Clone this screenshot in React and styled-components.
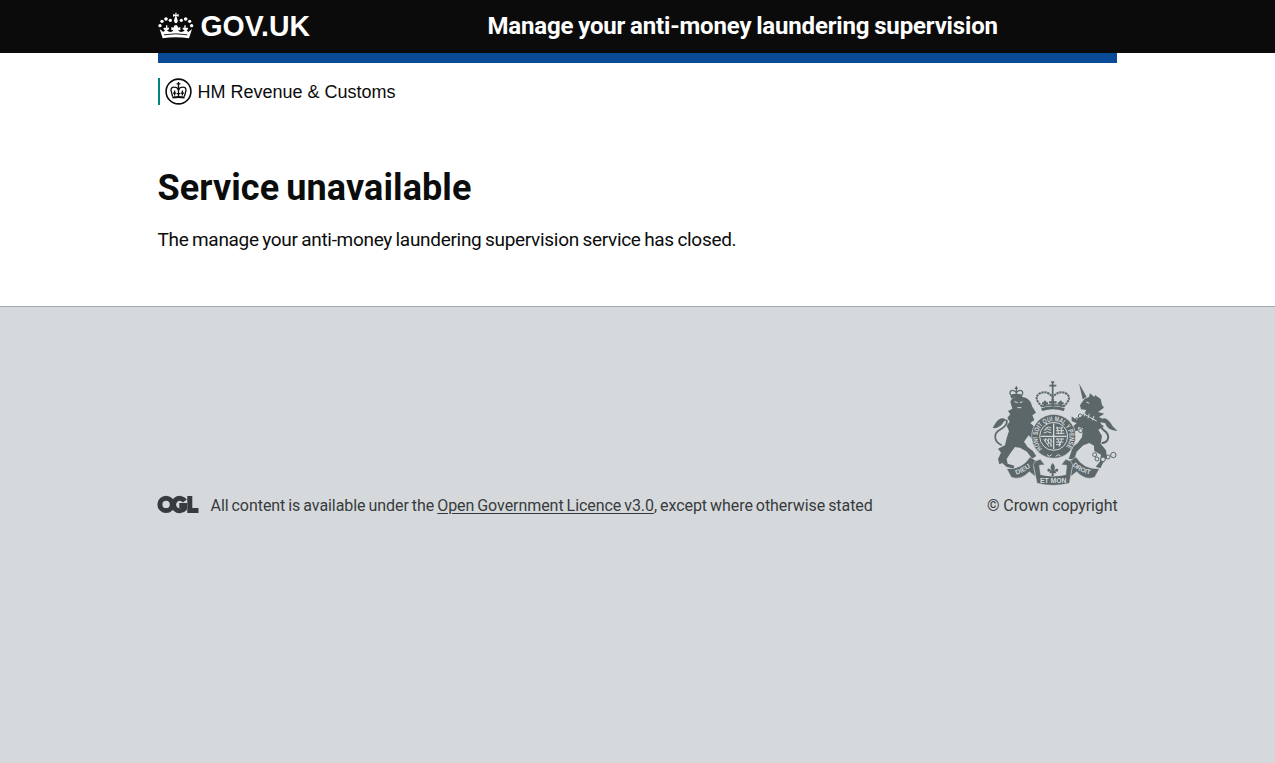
import React from 'react';
import styled, { createGlobalStyle } from 'styled-components';

const GlobalStyle = createGlobalStyle`
  * { box-sizing: border-box; }
  html { background: #d5d9dc; }
  body { margin: 0; background: #d5d9dc; font-family: Roboto, "Liberation Sans", sans-serif; color: #0b0c0c; }
`;

const Page = styled.div`
  min-height: 763px;
  display: flex;
  flex-direction: column;
`;
const Container = styled.div`
  width: 960px;
  margin: 0 auto;
`;
const Header = styled.header`
  height: 53px;
  background: #0b0b0b;
  color: #fff;
`;
const HeaderRow = styled(Container)`
  display: flex;
  height: 53px;
  align-items: flex-start;
`;
const HomeLink = styled.a`
  width: 330px;
  padding-top: 12px;
  color: #fff;
  line-height: 0;
`;
const ServiceName = styled.span`
  font-size: 24px;
  font-weight: 700;
  line-height: 30px;
  padding-top: 11px;
  white-space: nowrap;
  letter-spacing: ${(p) => p.$track}px;
  word-spacing: ${(p) => p.$word}px;
`;
const Main = styled.main`
  height: 254px;
  background: #fff;
  border-bottom: 1px solid #a1acb2;
`;
const BlueBar = styled.div`
  height: 10px;
  margin-right: 1px;
  background: #084a95;
`;
const Organisation = styled.div`
  margin-top: 15px;
  height: 27px;
  padding-left: 5px;
  border-left: 2px solid #00857d;
  display: flex;
  align-items: center;
`;
const OrganisationName = styled.span`
  font-family: "Liberation Sans", Arial, sans-serif;
  font-size: 18px;
  line-height: 27px;
  margin-left: 6px;
  padding-top: 2px;
  white-space: nowrap;
`;
const Heading = styled.h1`
  margin: 63px 0 0;
  font-size: 36px;
  line-height: 40px;
  font-weight: 700;
  white-space: nowrap;
  letter-spacing: ${(p) => p.$track}px;
  word-spacing: ${(p) => p.$word}px;
`;
const Body = styled.p`
  margin: 19px 0 0;
  font-size: 19px;
  line-height: 25px;
  white-space: nowrap;
  letter-spacing: ${(p) => p.$track}px;
  word-spacing: ${(p) => p.$word}px;
`;
const Footer = styled.footer`
  flex: 1;
  padding-top: 74px;
  color: #383b3d;
`;
const FooterRow = styled(Container)`
  display: flex;
  justify-content: space-between;
  align-items: flex-end;
  font-size: 16px;
  line-height: 20px;
`;
const Licence = styled.div`
  display: flex;
  align-items: flex-start;
  white-space: nowrap;
  height: 20px;
`;
const LicenceText = styled.span`
  margin-left: 12px;
  letter-spacing: ${(p) => p.$track}px;
  word-spacing: ${(p) => p.$word}px;
  a { color: inherit; text-decoration: underline; text-underline-offset: 2px; text-decoration-thickness: 1px; }
`;
const Copyright = styled.div`
  display: flex;
  flex-direction: column;
  align-items: flex-end;
  gap: 10px;
  white-space: nowrap;
  letter-spacing: ${(p) => p.$track}px;
`;

const GovLogo = () => (
  <svg width="156" height="28" viewBox="0 0 156 28" overflow="visible" role="img" aria-label="GOV.UK">
    <g fill="#fff" transform="translate(-8 -12) scale(.3333)">
      <path d="M76 38H80L79 44L86 42V50L79 48L83 61Q84 69 77 70Q71 69 72 61L76 48L69 50V42L76 44Z" />
      <circle cx="61" cy="61" r="5" /><circle cx="48" cy="57" r="5.500" /><circle cx="36" cy="64" r="5" /><circle cx="30" cy="77" r="5" />
      <circle cx="94" cy="61" r="5" /><circle cx="107" cy="57" r="5.500" /><circle cx="119" cy="64" r="5" /><circle cx="125" cy="77" r="5" />
      <path d="M29 87L40 96L45 91L40 87L42 83H48L48 76H52V83H57V88L51 91Q58 99 68 94L70 89L64 91V81L70 83L74 76H81L85 83L91 81V91L85 89L87 94Q97 99 104 91L98 88V83H103V76H107V83H113L115 87L110 91L115 96L126 87L117 115Q77 109 38 115Z" />
    </g>
    <path d="M6 22.800Q18 20.800 29.300 22.800" fill="none" stroke="#0b0b0b" strokeWidth=".9" />
    <text x="42.5" y="24.400" fill="#fff" fontFamily="Liberation Sans, Arial, sans-serif" fontWeight="700" fontSize="30" textLength="109.500" lengthAdjust="spacingAndGlyphs">GOV.UK</text>
  </svg>
);

const Crest = () => (
  <svg width="27" height="27" viewBox="0 0 27 27" aria-hidden="true">
    <circle cx="13.5" cy="13.5" r="12.4" fill="none" stroke="#0b0c0c" strokeWidth="1.6" />
    <g fill="none" stroke="#0b0c0c" strokeWidth="1.3">
      <path d="M13.5 4v9M11.600 5.900h3.800" />
      <path d="M7.600 18.500L6 12.500C5.700 10 7.500 9 9.200 9.100c2.300 0 3.600 .9 4.300 2.900M19.400 18.500L21 12.500C21.300 10 19.500 9 17.800 9.100c-2.300 0-3.600 .9-4.300 2.900" />
      <path d="M7.400 19.600c4-.9 8.200-.9 12.200 0" strokeWidth="2" />
      <path d="M9.600 12.500v5M8 15.200h3.200M17.400 12.500v5M15.800 15.200H19M13.500 13v5M11.700 15.700h3.600" />
    </g>
  </svg>
);

const OglLogo = () => (
  <svg width="41" height="18" viewBox="0 0 41 18" overflow="visible" role="img" aria-label="OGL">
    <g fill="none" stroke="#383b3d" strokeWidth="5" transform="translate(-.5 -.4)">
      <circle cx="8.600" cy="8.800" r="6.200" />
      <path d="M27.400 5.400A6.200 6.200 0 1 0 27 13V10H21.800" />
      <path d="M32.300 .3V14.900H41" />
    </g>
  </svg>
);

const INK = '#5b6769';
const PAPER = '#d5d9dc';

const RoyalArms = () => (
  <svg width="126" height="105" viewBox="36 32 378 315" aria-hidden="true">
    <defs>
      <path id="garter" d="M187 235A48 48 0 1 1 254 235" />
      <path id="ribbonLeft" d="M109 313Q139 304 160 281" />
      <path id="ribbonRight" d="M277 285Q300 308 336 314" />
    </defs>
    <g fill={INK}>
      <path d="M91 94C94 82 105 78 123 79C144 81 154 93 156 108L168 127L157 135L163 149L151 158L163 169L158 184L171 205L175 229L163 231L159 209L146 195L132 214L143 230L158 241L169 257L156 265L141 244L120 232L105 230L91 249L80 266L83 280L103 286L101 295L79 289L67 278L58 282L54 266L63 247L54 235L75 225L80 203L87 182L80 166L89 154L82 142L91 132L84 122L97 115Z" />
      <path d="M343 80L330 69L327 80L313 86L300 105L303 117L319 119L306 137L289 148L275 138L275 152L290 159L276 171L281 185L295 180L294 170L309 174L306 201L293 218L279 229L266 266L283 267L290 244L310 225L328 218L342 226L343 242L363 253L359 275L347 289L361 294L369 278L381 263L378 240L362 220L366 197L355 178L372 168L357 157L375 150L357 140L373 130L354 125L372 112L366 104L362 86L345 74Z" />
      <path d="M308 87L297 39L320 80Z" />
      <path d="M147 164L177 176L184 190L158 180L138 190L130 180Z" />
      <path d="M91 73Q109 67 127 73L126 84Q109 79 93 84Z" />
    </g>
    <g fill="none" stroke={INK}>
      <path d="M65 225C38 212 42 187 60 178C75 170 85 159 79 148" strokeWidth="5" />
      <path d="M365 219C382 217 391 202 379 186C364 175 354 165 360 151" strokeWidth="6" />
      <path d="M92 74C85 60 99 55 109 67C119 55 133 60 126 74M109 48V76M104 54H114" strokeWidth="4" />
      <path d="M187 109Q160 85 176 71Q199 57 218 80Q239 57 261 71Q277 85 250 109" strokeWidth="6" strokeDasharray="7 2" />
      <path d="M218 36V95M208 46H229M213 35H223" strokeWidth="5" />
      <path d="M195 91V108M186 99H204M242 91V108M233 99H251M218 86V108M207 96H230" strokeWidth="7" />
      <path d="M187 108Q219 99 251 108" strokeWidth="5" />
      <path d="M185 118Q219 106 253 118" strokeWidth="9" />
    </g>
    <path d="M80 150C63 133 48 154 38 173C54 176 66 165 72 153ZM359 155C372 130 390 154 398 168L412 181C394 182 381 174 376 159Z" fill={INK} />
    <circle cx="221" cy="198" r="66" fill={INK} stroke={PAPER} strokeWidth="2" />
    <circle cx="221" cy="198" r="42" fill={INK} stroke={PAPER} strokeWidth="3" />
    <path d="M221 159V237M182 198H260" stroke={PAPER} strokeWidth="4" />
    <g fill="none" stroke={PAPER} strokeWidth="3">
      <path d="M192 180Q202 171 213 180M191 188Q202 180 214 188M196 174L205 170L214 173" />
      <path d="M228 173H247M228 181H252M228 189H253M231 169L236 192M246 169L243 192" />
      <path d="M191 206L207 229M198 205L215 226M207 204L216 214M213 204V230M205 204V222M196 204V215" />
      <path d="M228 206H252M228 215H250M228 223H243M233 204L240 225M246 204L237 229" />
      <path d="M201 253L208 258L215 253M227 258L235 253L242 257" />
    </g>
    <text fill={PAPER} fontFamily="Liberation Sans, Arial, sans-serif" fontWeight="700" fontSize="21">
      <textPath href="#garter" textLength="220" lengthAdjust="spacingAndGlyphs">HONI SOIT QUI MAL Y PENSE</textPath>
    </text>
    <g fill={INK} stroke={PAPER} strokeWidth="1.500">
      <path d="M80 295Q126 298 150 260L177 277L161 289L167 319L148 304Q122 331 94 321Z" />
      <path d="M358 295Q312 298 288 260L261 277L277 289L271 319L290 304Q316 331 344 321Z" />
      <path d="M160 283L166 272L181 267L194 283L178 285L182 313Q219 322 257 313L260 285L244 283L257 267L272 272L278 283L268 339Q219 351 171 339Z" />
    </g>
    <path d="M184 287L183 312Q220 320 257 312V287Q219 299 184 287Z" fill={PAPER} />
    <path fill={INK} d="M218 278Q206 291 216 302Q203 288 202 299Q202 306 211 303L208 309H216L214 317H222L220 309H229L226 303Q235 306 235 299Q233 288 221 302Q230 291 218 278Z" />
    <g fill={PAPER} fontFamily="Liberation Sans, Arial, sans-serif" fontWeight="700" fontSize="20">
      <text><textPath href="#ribbonLeft" textLength="49" lengthAdjust="spacingAndGlyphs">DIEU</textPath></text>
      <text x="180" y="337" textLength="79" lengthAdjust="spacingAndGlyphs">ET MON</text>
      <text><textPath href="#ribbonRight" textLength="60" lengthAdjust="spacingAndGlyphs">DROIT</textPath></text>
    </g>
    <g fill="none" stroke={PAPER} strokeWidth="3">
      <path d="M103 94L113 97M119 97L128 94M112 112H124" />
      <path d="M319 95L328 99M307 128Q328 140 350 152M315 124L313 138M328 130L324 144M342 137L337 150" />
    </g>
    <g fill="none" stroke={INK} strokeWidth="3">
      <circle cx="301" cy="137" r="6" /><circle cx="291" cy="148" r="5" /><circle cx="302" cy="181" r="6" />
      <circle cx="344" cy="253" r="6" fill={PAPER} /><circle cx="351" cy="266" r="6" fill={PAPER} /><circle cx="369" cy="267" r="7" fill={PAPER} />
      <circle cx="384" cy="260" r="6" /><circle cx="400" cy="254" r="8" />
    </g>
  </svg>
);

export default function App() {
  return (
    <Page>
      <GlobalStyle />
      <Header>
        <HeaderRow>
          <HomeLink><GovLogo /></HomeLink>
          <ServiceName $track={-0.16} $word={-1}>Manage your anti-money laundering supervision</ServiceName>
        </HeaderRow>
      </Header>
      <Main>
        <Container>
          <BlueBar />
          <Organisation>
            <Crest />
            <OrganisationName>HM Revenue &amp; Customs</OrganisationName>
          </Organisation>
          <Heading $track={0.1} $word={-2}>Service unavailable</Heading>
          <Body $track={-0.3} $word={-0.9}>The manage your anti-money laundering supervision service has closed.</Body>
        </Container>
      </Main>
      <Footer>
        <FooterRow>
          <Licence>
            <OglLogo />
            <LicenceText $track={-0.06} $word={-0.9}>All content is available under the <a>Open Government Licence v3.0</a>, except where otherwise stated</LicenceText>
          </Licence>
          <Copyright $track={-0.12}><RoyalArms /><span>© Crown copyright</span></Copyright>
        </FooterRow>
      </Footer>
    </Page>
  );
}
